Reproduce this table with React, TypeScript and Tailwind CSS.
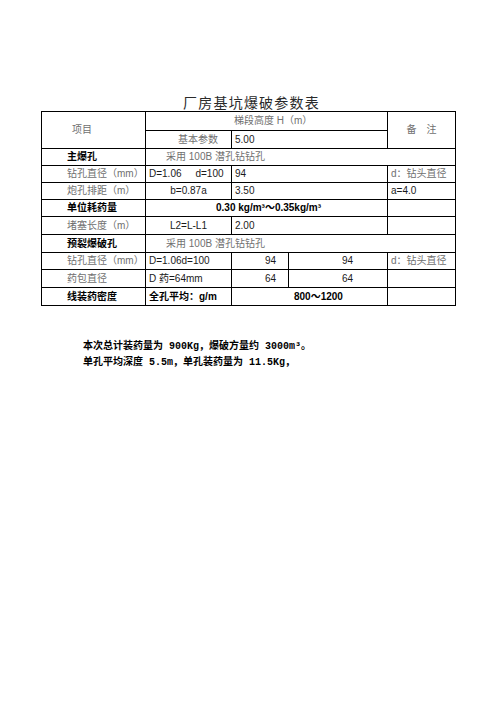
const gray = 'text-[#707070] font-normal'
const label = `pl-[25px] text-left ${gray}`
const labelBold = 'pl-[25px] text-left font-bold text-black'
const cell = 'border border-black p-0 leading-none'

export default function App() {
  return (
    <div className="min-h-[702px] w-[496px] bg-white font-['Liberation_Sans','Noto_Sans_CJK_SC',sans-serif] text-[10px] text-[#1a1a1a]">
      <div className="pl-[41px] pt-[96px]">
        <h1 className="w-[414px] pl-[7px] text-center text-[14px] font-normal leading-[15px] tracking-[1.2px] text-[#2a2a2a]">
          厂房基坑爆破参数表
        </h1>

        {/* 参数表 */}
        <table className="w-[414px] table-fixed border-collapse border border-black">
          <colgroup>
            <col className="w-[104px]" />
            <col className="w-[86px]" />
            <col className="w-[57px]" />
            <col className="w-[99px]" />
            <col className="w-[68px]" />
          </colgroup>
          <tbody>
            <tr className="h-[19px]">
              <td rowSpan={2} className={`${cell} pl-[30px] text-left ${gray}`}>项目</td>
              <td colSpan={3} className={`${cell} pl-[88px] text-left ${gray}`}>梯段高度 H（m）</td>
              <td rowSpan={2} className={`${cell} text-center ${gray}`}>备　注</td>
            </tr>
            <tr className="h-[18px]">
              <td className={`${cell} pr-[13px] text-right ${gray}`}>基本参数</td>
              <td colSpan={2} className={`${cell} pl-[3px]`}>5.00</td>
            </tr>

            <tr className="h-[17px]">
              <td className={`${cell} ${labelBold}`}>主爆孔</td>
              <td colSpan={4} className={`${cell} pl-[20px] ${gray}`}>采用 100B 潜孔钻钻孔</td>
            </tr>
            <tr className="h-[17px]">
              <td className={`${cell} ${label}`}>钻孔直径（mm）</td>
              <td className={`${cell} pl-[3px] whitespace-pre`}>D=1.06     d=100</td>
              <td colSpan={2} className={`${cell} pl-[3px]`}>94</td>
              <td className={`${cell} pl-[3px] ${gray}`}>d：钻头直径</td>
            </tr>
            <tr className="h-[17px]">
              <td className={`${cell} ${label}`}>炮孔排距（m）</td>
              <td className={`${cell} text-center`}>b=0.87a</td>
              <td colSpan={2} className={`${cell} pl-[3px]`}>3.50</td>
              <td className={`${cell} pl-[3px]`}>a=4.0</td>
            </tr>
            <tr className="h-[17px]">
              <td className={`${cell} ${labelBold}`}>单位耗药量</td>
              <td colSpan={3} className={`${cell} pl-[70px] font-bold text-black`}>0.30 kg/m³～0.35kg/m³</td>
              <td className={cell}></td>
            </tr>
            <tr className="h-[18px]">
              <td className={`${cell} ${label}`}>堵塞长度（m）</td>
              <td className={`${cell} text-center`}>L2=L-L1</td>
              <td colSpan={2} className={`${cell} pl-[3px]`}>2.00</td>
              <td className={cell}></td>
            </tr>

            <tr className="h-[18px]">
              <td className={`${cell} ${labelBold}`}>预裂爆破孔</td>
              <td colSpan={4} className={`${cell} pl-[20px] ${gray}`}>采用 100B 潜孔钻钻孔</td>
            </tr>
            <tr className="h-[17px]">
              <td className={`${cell} ${label}`}>钻孔直径（mm）</td>
              <td className={`${cell} pl-[3px]`}>D=1.06d=100</td>
              <td className={`${cell} pr-[12px] text-right`}>94</td>
              <td className={`${cell} pr-[34px] text-right`}>94</td>
              <td className={`${cell} pl-[3px] ${gray}`}>d：钻头直径</td>
            </tr>
            <tr className="h-[18px]">
              <td className={`${cell} ${label}`}>药包直径</td>
              <td className={`${cell} pl-[3px]`}>D 药=64mm</td>
              <td className={`${cell} pr-[12px] text-right`}>64</td>
              <td className={`${cell} pr-[34px] text-right`}>64</td>
              <td className={cell}></td>
            </tr>
            <tr className="h-[18px]">
              <td className={`${cell} ${labelBold}`}>线装药密度</td>
              <td className={`${cell} pl-[3px] font-bold text-black`}>全孔平均：g/m</td>
              <td colSpan={2} className={`${cell} pl-[62px] font-bold text-black`}>800～1200</td>
              <td className={cell}></td>
            </tr>
          </tbody>
        </table>
      </div>

      {/* 说明 */}
      <div className="mt-[33px] pl-[83px] font-['Liberation_Mono','Noto_Sans_CJK_SC',monospace] text-[10px] font-bold leading-[16px] text-black">
        <p>本次总计装药量为 900Kg，爆破方量约 3000m³。</p>
        <p>单孔平均深度 5.5m，单孔装药量为 11.5Kg，</p>
      </div>
    </div>
  )
}
